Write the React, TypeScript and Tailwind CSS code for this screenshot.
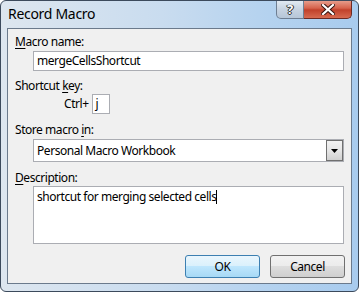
import React from "react";

const font = { fontFamily: '"Noto Sans", "Open Sans", sans-serif' };

function U({ children }: { children: React.ReactNode }) {
  return <span className="underline underline-offset-2">{children}</span>;
}

export default function App() {
  return (
    <div
      className="w-[359px] h-[292px] flex flex-col rounded-t-[6px] rounded-b-[6px] border border-[#3c4a5c] bg-[linear-gradient(90deg,#dde6ef_0%,#c9dcef_45%,#b4d2ef_75%,#a8cbee_100%)] text-black overflow-hidden"
      style={font}
    >
      {/* Title bar */}
      <div className="h-[27px] flex items-start justify-between">
        <div className="pl-[7px] pt-[4px] text-[14px] tracking-[-0.3px] leading-[18px] text-black">Record Macro</div>
        <div className="flex mr-[6px] mt-[-1px]">
          <div className="w-[28px] h-[19px] rounded-bl-[5px] border border-[#6e7e92] border-t-0 bg-[linear-gradient(180deg,#e4ecf4_0%,#c8d4e2_50%,#b6c6d8_100%)] flex items-center justify-center">
            <span className="text-[13px] font-bold text-white leading-none [text-shadow:0_0_1px_#333,0_0_1px_#333,1px_0_0_#333,-1px_0_0_#333,0_1px_0_#333]">?</span>
          </div>
          <div className="w-[48px] h-[19px] rounded-br-[5px] border border-[#6d2a24] border-t-0 border-l-0 bg-[linear-gradient(180deg,#e8a493_0%,#d6634d_45%,#c1412b_55%,#d76a50_100%)] flex items-center justify-center">
            <svg width="14" height="11" viewBox="0 0 14 11">
              <path d="M2 1 L12 10 M12 1 L2 10" stroke="#3a1510" strokeWidth="4.2" strokeLinecap="square" />
              <path d="M2 1 L12 10 M12 1 L2 10" stroke="#ffffff" strokeWidth="2.2" strokeLinecap="square" />
            </svg>
          </div>
        </div>
      </div>

      {/* Inner panel */}
      <div className="mx-[6px] h-[256px] border border-[#6b7a8c] bg-[#f0f0f0] flex flex-col text-[12px] tracking-[-0.45px] leading-[16px] pl-[7px]">
        <div className="mt-[5px]"><U>M</U>acro name:</div>
        <div className="mt-[1px] ml-[18px] w-[311px] h-[20px] border border-[#abadb3] bg-white pl-[3px] flex items-center">
          mergeCellsShortcut
        </div>

        <div className="mt-[7px]">Shortcut <U>k</U>ey:</div>
        <div className="flex items-center ml-[49px] h-[20px]">
          <span>Ctrl+</span>
          <div className="ml-[3px] w-[18px] h-[20px] border border-[#abadb3] bg-white pl-[3px] flex items-center">j</div>
        </div>

        <div className="mt-[8px]">Store macro <U>i</U>n:</div>
        <div className="mt-[1px] ml-[18px] w-[311px] h-[23px] border border-[#abadb3] bg-white flex items-center justify-between">
          <span className="pl-[3px]">Personal Macro Workbook</span>
          <div className="w-[17px] h-[21px] border border-[#707070] bg-[linear-gradient(180deg,#f2f2f2_0%,#e6e6e6_50%,#d0d0d0_100%)] flex items-center justify-center">
            <svg width="7" height="4" viewBox="0 0 7 4">
              <path d="M0 0 H7 L3.5 4 Z" fill="#000" />
            </svg>
          </div>
        </div>

        <div className="mt-[8px]"><U>D</U>escription:</div>
        <div className="ml-[18px] w-[311px] h-[58px] border border-[#abadb3] bg-white pl-[3px] pt-[2px] flex items-start">
          <span>shortcut for merging selected cells</span>
          <span className="inline-block w-[1px] h-[14px] bg-black mt-[1px]" />
        </div>

        <div className="mt-[11px] flex justify-end gap-[10px] pr-[6px]">
          <div className="w-[75px] h-[23px] rounded-[3px] border border-[#3c7fb1] bg-[linear-gradient(180deg,#eaf6fd_0%,#d9f0fc_50%,#bee6fd_50%,#a7d9f5_100%)] flex items-center justify-center">
            OK
          </div>
          <div className="w-[75px] h-[23px] rounded-[3px] border border-[#707070] bg-[linear-gradient(180deg,#f2f2f2_0%,#ebebeb_50%,#dddddd_50%,#cfcfcf_100%)] flex items-center justify-center">
            Cancel
          </div>
        </div>
      </div>
    </div>
  );
}
